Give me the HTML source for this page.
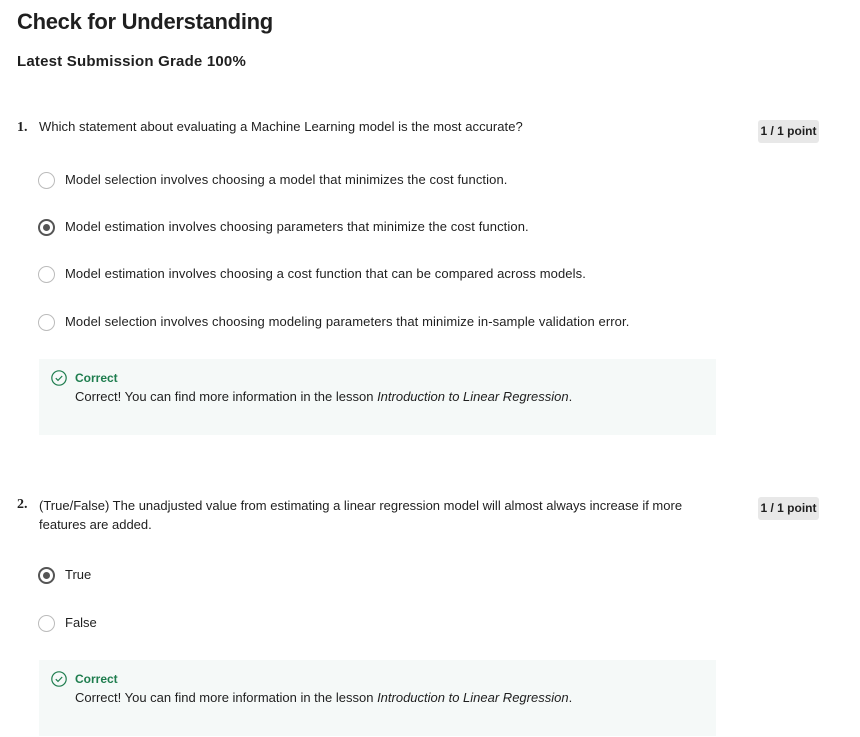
<!DOCTYPE html>
<html><head><meta charset="utf-8"><style>
body{margin:0;width:860px;height:737px;background:#fff;font-family:"Liberation Sans",sans-serif;color:#1f1f1f;position:relative;overflow:hidden}
.a{position:absolute;white-space:nowrap}
.t{font-size:13px}
.r{position:absolute;border:1.5px solid #bbb;border-radius:50%;box-sizing:border-box;width:17px;height:17px}
.r.s{border:2px solid #555}
.r.s::after{content:"";position:absolute;left:3px;top:3px;width:7px;height:7px;border-radius:50%;background:#555}
.pt{position:absolute;left:758px;width:61px;height:23px;background:#e8e8e8;border-radius:3px;font-size:12px;font-weight:bold;text-align:center;line-height:23px}
.box{position:absolute;left:39px;width:677px;height:76px;background:#f5f9f8}
.c{position:absolute;left:12px;top:11px;width:16px;height:16px}
.cl{position:absolute;left:36px;top:12px;font-size:12px;font-weight:bold;color:#1e7d4e}
.cm{position:absolute;left:36px;top:30px;font-size:13px;white-space:nowrap}
</style></head><body>
<div class="a" style="left:17px;top:9px;font-size:22px;font-weight:bold;letter-spacing:-0.3px">Check for Understanding</div>
<div class="a" style="left:17px;top:53px;font-size:15px;font-weight:bold;letter-spacing:0.2px">Latest Submission Grade 100%</div>

<div class="a t" style="left:17px;top:120px;font-weight:bold;font-family:'Liberation Serif',serif;font-size:14px">1.</div>
<div class="a t" style="left:39px;top:119px;letter-spacing:0.05px">Which statement about evaluating a Machine Learning model is the most accurate?</div>
<div class="pt" style="top:120px">1 / 1 point</div>
<div class="r" style="left:38px;top:172px"></div><div class="a t" style="left:65px;top:172px;letter-spacing:0.1px">Model selection involves choosing a model that minimizes the cost function.</div>
<div class="r s" style="left:38px;top:219px"></div><div class="a t" style="left:65px;top:219px;letter-spacing:0.1px">Model estimation involves choosing parameters that minimize the cost function.</div>
<div class="r" style="left:38px;top:266px"></div><div class="a t" style="left:65px;top:266px;letter-spacing:0.1px">Model estimation involves choosing a cost function that can be compared across models.</div>
<div class="r" style="left:38px;top:314px"></div><div class="a t" style="left:65px;top:314px;letter-spacing:0.1px">Model selection involves choosing modeling parameters that minimize in-sample validation error.</div>
<div class="box" style="top:359px">
<svg class="c" viewBox="0 0 16 16"><circle cx="8" cy="8" r="7.2" fill="none" stroke="#1e7d4e" stroke-width="1.2"/><path d="M4.8 8.2l2.2 2.2 4.2-4.4" fill="none" stroke="#1e7d4e" stroke-width="1.2"/></svg>
<div class="cl">Correct</div>
<div class="cm">Correct! You can find more information in the lesson <i>Introduction to Linear Regression</i>.</div></div>

<div class="a t" style="left:17px;top:497px;font-weight:bold;font-family:'Liberation Serif',serif;font-size:14px">2.</div>
<div class="a t" style="left:39px;top:496px;line-height:19px">(True/False) The unadjusted value from estimating a linear regression model will almost always increase if more<br>features are added.</div>
<div class="pt" style="top:497px">1 / 1 point</div>
<div class="r s" style="left:38px;top:567px"></div><div class="a t" style="left:65px;top:567px">True</div>
<div class="r" style="left:38px;top:615px"></div><div class="a t" style="left:65px;top:615px">False</div>
<div class="box" style="top:660px">
<svg class="c" viewBox="0 0 16 16"><circle cx="8" cy="8" r="7.2" fill="none" stroke="#1e7d4e" stroke-width="1.2"/><path d="M4.8 8.2l2.2 2.2 4.2-4.4" fill="none" stroke="#1e7d4e" stroke-width="1.2"/></svg>
<div class="cl">Correct</div>
<div class="cm">Correct! You can find more information in the lesson <i>Introduction to Linear Regression</i>.</div></div>
</body></html>
